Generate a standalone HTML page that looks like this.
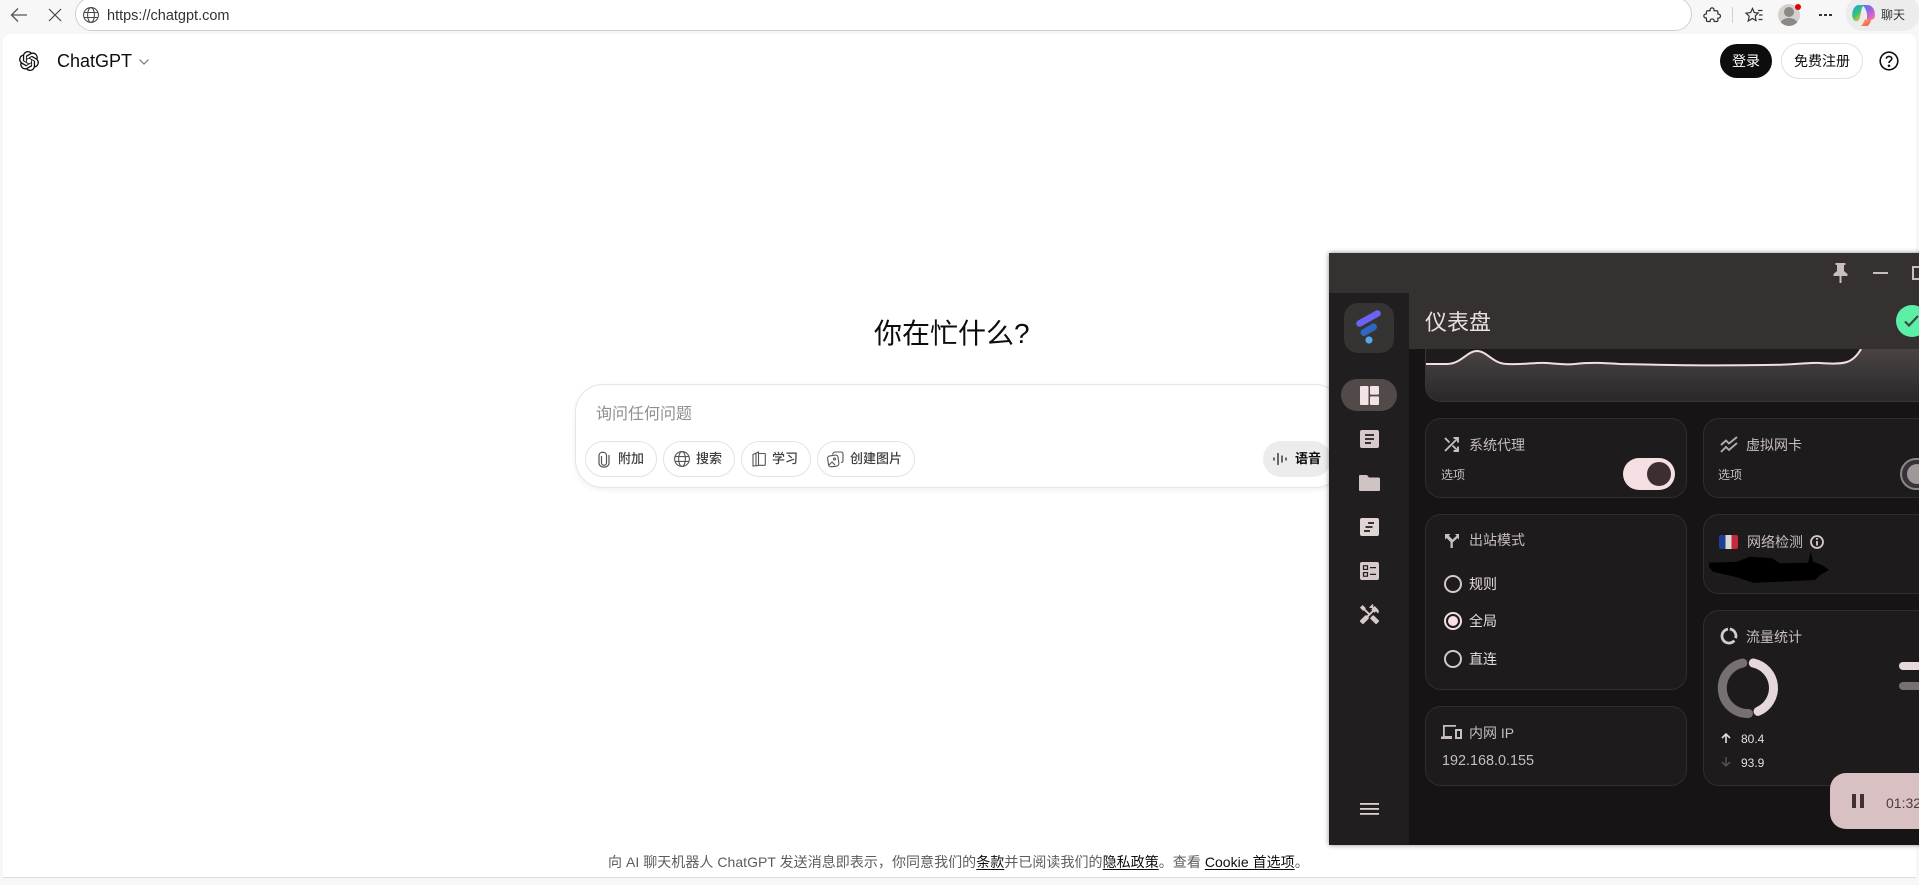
<!DOCTYPE html>
<html lang="zh"><head><meta charset="utf-8"><title>ChatGPT</title>
<style>
*{box-sizing:border-box;margin:0;padding:0}
html,body{width:1919px;height:885px;overflow:hidden;background:#f7f7f7}
body{position:relative;font-family:"Liberation Sans","Noto Sans CJK SC",sans-serif}
.a{position:absolute}
.t{position:absolute;white-space:nowrap;line-height:20px}
svg{position:absolute;display:block;overflow:visible}
.pill{position:absolute;top:441px;height:36px;border:1px solid #e3e3e3;border-radius:18px;background:#fff}
.pt{font-size:13px;color:#404040;font-weight:500;top:449px}
.card{position:absolute;background:#1d1b1c;border:1px solid #2f2d2e;border-radius:16px}
.ct{font-size:14px;color:#c9bdbd}
.rl{font-size:14px;color:#e6dcdc}
.radio{position:absolute;width:18px;height:18px;border:2px solid #d6c8c8;border-radius:50%}
u{text-underline-offset:2px}
</style></head><body>

<!-- browser chrome -->
<svg style="left:10px;top:6px" width="18" height="18" viewBox="0 0 18 18" fill="none" stroke="#555" stroke-width="1.3"><path d="M1.5 9H17M8 2.5L1.5 9L8 15.5"/></svg>
<svg style="left:49px;top:9px" width="12" height="12" viewBox="0 0 12 12" fill="none" stroke="#444" stroke-width="1.2"><path d="M0 0L12 12M12 0L0 12"/></svg>
<div class="a" style="left:75px;top:-3px;width:1617px;height:34px;background:#fff;border:1px solid #cfcfcf;border-radius:17px"></div>
<svg style="left:83px;top:7px" width="16" height="16" viewBox="0 0 16 16" fill="none" stroke="#4a4a4a" stroke-width="1.1"><circle cx="8" cy="8" r="7.4"/><ellipse cx="8" cy="8" rx="3.4" ry="7.4"/><path d="M1 5.5H15M1 10.5H15"/></svg>
<div class="t" style="left:107px;top:6px;font-size:14.5px;color:#333">https://chatgpt.com</div>

<svg style="left:1703px;top:6px" width="18" height="18" viewBox="0 0 24 24" fill="none" stroke="#333" stroke-width="1.6" stroke-linejoin="round"><path d="M9.5 4.5a2.7 2.7 0 0 1 5.2 0c.2.9 0 1.5 0 1.8h3.5c1 0 1.6.7 1.6 1.6v3c.4-.1 1-.2 1.5 0a2.7 2.7 0 0 1 0 5.2c-.5.2-1.1.1-1.5 0v3c0 1-.7 1.6-1.6 1.6h-3.4c.1-.5.2-1 0-1.5a2.7 2.7 0 0 0-5.2 0c-.2.5-.1 1 0 1.5H6.2c-1 0-1.6-.7-1.6-1.6v-3.2c-.4.1-1 .2-1.5 0a2.7 2.7 0 0 1 0-5.2c.5-.2 1.1-.1 1.5 0V7.9c0-1 .7-1.6 1.6-1.6h3.4c-.1-.5-.2-1.2-.1-1.8Z"/></svg>
<div class="a" style="left:1732px;top:7px;width:1px;height:16px;background:#d0d0d0"></div>
<svg style="left:1745px;top:7px" width="18" height="16" viewBox="0 0 18 16" fill="none" stroke="#333" stroke-width="1.2"><path d="M7.5 1.5L9.3 5.6L13.2 6L10.3 9L11 13.6L7.5 11.5L3.2 14L4.2 9.2L1 6.2L5.6 5.6Z"/><path d="M13 3.5H17.5M14 8H17.5M13.5 12.5H17.5"/></svg>
<div class="a" style="left:1778px;top:4px;width:22px;height:22px;border-radius:50%;background:#d3d1cf;overflow:hidden">
 <div class="a" style="left:6px;top:3px;width:10px;height:10px;border-radius:50%;background:#8c8884"></div>
 <div class="a" style="left:2px;top:14px;width:18px;height:14px;border-radius:50%;background:#8c8884"></div>
</div>
<div class="a" style="left:1795px;top:4px;width:6px;height:6px;border-radius:50%;background:#e30000"></div>
<div class="a" style="left:1819px;top:14px;width:3px;height:2.4px;background:#333;box-shadow:5px 0 #333,10px 0 #333"></div>
<div class="a" style="left:1846px;top:-4px;width:74px;height:35px;border-radius:17px;background:#ececec"></div>
<svg style="left:1852px;top:5px" width="23" height="21" viewBox="0 0 23 21">
 <defs>
  <linearGradient id="c1" x1="0" y1="0" x2=".6" y2="1"><stop offset="0" stop-color="#1a9fea"/><stop offset=".55" stop-color="#34c27c"/><stop offset="1" stop-color="#f6c62e"/></linearGradient>
  <linearGradient id="c2" x1="0" y1="0" x2=".7" y2="1"><stop offset="0" stop-color="#2f8cf0"/><stop offset=".5" stop-color="#9a62e8"/><stop offset="1" stop-color="#f06ab0"/></linearGradient>
  <linearGradient id="c3" x1="0" y1="0" x2="1" y2="1"><stop offset="0" stop-color="#ffb43a"/><stop offset="1" stop-color="#ee4a6a"/></linearGradient>
 </defs>
 <path fill="url(#c1)" d="M7 0H12.5C10.5 .5 9.8 3 9.2 6L7.8 13C7.2 16 5 17 3 16C1 15 0 12 .3 8.5C.7 3.5 3.5 0 7 0Z"/>
 <path fill="url(#c2)" d="M10 0H15.5C19.5 0 22.3 3.5 22.8 8C23.2 12 22.5 14.5 19.5 14.5H14.8C15.6 10 15 3.5 10 0Z"/>
 <path fill="url(#c3)" d="M8 21H14.5C17 21 18 18 19.5 14.5H13.5C11.5 14.5 11.5 21 8 21Z"/>
</svg>
<div class="t" style="left:1881px;top:5px;font-size:12px;color:#333">聊天</div>

<!-- page -->
<div class="a" style="left:3px;top:34px;width:1913px;height:844px;background:#fff;border-radius:8px 8px 0 0;border-bottom:1px solid #dcdcdc"></div>

<svg style="left:19px;top:51px" width="20" height="20" viewBox="0 0 24 24" fill="#111"><path d="M22.2819 9.8211a5.9847 5.9847 0 0 0-.5157-4.9108 6.0462 6.0462 0 0 0-6.5098-2.9A6.0651 6.0651 0 0 0 4.9807 4.1818a5.9847 5.9847 0 0 0-3.9977 2.9 6.0462 6.0462 0 0 0 .7427 7.0966 5.98 5.98 0 0 0 .511 4.9107 6.051 6.051 0 0 0 6.5146 2.9001A5.9847 5.9847 0 0 0 13.2599 24a6.0557 6.0557 0 0 0 5.7718-4.2058 5.9894 5.9894 0 0 0 3.9977-2.9001 6.0557 6.0557 0 0 0-.7475-7.0729zm-9.022 12.6081a4.4755 4.4755 0 0 1-2.8764-1.0408l.1419-.0804 4.7783-2.7582a.7948.7948 0 0 0 .3927-.6813v-6.7369l2.02 1.1686a.071.071 0 0 1 .038.052v5.5826a4.504 4.504 0 0 1-4.4945 4.4944zm-9.6607-4.1254a4.4708 4.4708 0 0 1-.5346-3.0137l.142.0852 4.783 2.7582a.7712.7712 0 0 0 .7806 0l5.8428-3.3685v2.3324a.0804.0804 0 0 1-.0332.0615L9.74 19.9502a4.4992 4.4992 0 0 1-6.1408-1.6464zM2.3408 7.8956a4.485 4.485 0 0 1 2.3655-1.9728V11.6a.7664.7664 0 0 0 .3879.6765l5.8144 3.3543-2.0201 1.1685a.0757.0757 0 0 1-.071 0l-4.8303-2.7865A4.504 4.504 0 0 1 2.3408 7.872zm16.5963 3.8558L13.1038 8.364 15.1192 7.2a.0757.0757 0 0 1 .071 0l4.8303 2.7913a4.4944 4.4944 0 0 1-.6765 8.1042v-5.6772a.79.79 0 0 0-.407-.667zm2.0107-3.0231l-.142-.0852-4.7735-2.7818a.7759.7759 0 0 0-.7854 0L9.409 9.2297V6.8974a.0662.0662 0 0 1 .0284-.0615l4.8303-2.7866a4.4992 4.4992 0 0 1 6.6802 4.66zM8.3065 12.863l-2.02-1.1638a.0804.0804 0 0 1-.038-.0567V6.0742a4.4992 4.4992 0 0 1 7.3757-3.4537l-.142.0805L8.704 5.459a.7948.7948 0 0 0-.3927.6813zm1.0976-2.3654l2.602-1.4998 2.6069 1.4998v2.9994l-2.5974 1.4997-2.6067-1.4997Z"/></svg>
<div class="t" style="left:57px;top:51px;font-size:18px;color:#0d0d0d">ChatGPT</div>
<svg style="left:139px;top:59px" width="10" height="6" viewBox="0 0 10 6" fill="none" stroke="#777" stroke-width="1.2"><path d="M.5 .5L5 5L9.5 .5"/></svg>

<div class="a" style="left:1720px;top:44px;width:52px;height:34px;border-radius:17px;background:#0d0d0d"></div>
<div class="t" style="left:1732px;top:51px;font-size:14px;color:#fff">登录</div>
<div class="a" style="left:1781px;top:43px;width:82px;height:36px;border-radius:18px;background:#fff;border:1px solid #e0e0e0"></div>
<div class="t" style="left:1794px;top:51px;font-size:14px;color:#0d0d0d">免费注册</div>
<svg style="left:1879px;top:51px" width="20" height="20" viewBox="0 0 20 20" fill="none" stroke="#111" stroke-width="1.6"><circle cx="10" cy="10" r="8.8"/><path d="M7.3 7.8C7.3 4.6 12.8 4.6 12.8 7.8C12.8 9.8 10 9.8 10 12"/><circle cx="10" cy="14.8" r=".5" fill="#111"/></svg>

<div class="t" style="left:874px;top:314px;font-size:28px;line-height:40px;color:#0d0d0d">你在忙什么?</div>

<div class="a" style="left:575px;top:384px;width:768px;height:104px;background:#fff;border:1px solid #e5e5e5;border-radius:28px;box-shadow:0 2px 6px rgba(0,0,0,.06)"></div>
<div class="t" style="left:596px;top:405px;font-size:16px;color:#8f8f8f">询问任何问题</div>

<div class="pill" style="left:585px;width:72px"></div>
<svg style="left:597px;top:451px" width="14" height="17" viewBox="0 0 14 17" fill="none" stroke="#555" stroke-width="1.2"><path d="M4.5 5V12C4.5 15 9.5 15 9.5 12V4.5C9.5 .2 2 .2 2 4.5V12C2 17.5 12 17.5 12 12V4"/></svg>
<div class="t pt" style="left:618px">附加</div>

<div class="pill" style="left:663px;width:72px"></div>
<svg style="left:674px;top:451px" width="16" height="16" viewBox="0 0 16 16" fill="none" stroke="#555" stroke-width="1.1"><circle cx="8" cy="8" r="7.4"/><ellipse cx="8" cy="8" rx="3.4" ry="7.4"/><path d="M.8 5.6H15.2M.8 10.4H15.2"/></svg>
<div class="t pt" style="left:696px">搜索</div>

<div class="pill" style="left:741px;width:70px"></div>
<svg style="left:752px;top:451px" width="14" height="16" viewBox="0 0 14 16" fill="none" stroke="#555" stroke-width="1.1"><path d="M1 3.5L6.5 1V14.5L1 15Z M6.5 2.5H12.5C13 2.5 13.3 2.8 13.3 3.3V13.5C13.3 14 13 14.3 12.5 14.3H6.5"/><path d="M4 2.5V14.6"/></svg>
<div class="t pt" style="left:772px">学习</div>

<div class="pill" style="left:817px;width:98px"></div>
<svg style="left:827px;top:451px" width="17" height="17" viewBox="0 0 17 17" fill="none" stroke="#555" stroke-width="1.1"><rect x="1" y="4.5" width="10.5" height="11" rx="2.5" transform="rotate(-8 6 10)"/><path d="M5.5 3.5L6 2.5C6.3 1.5 7 1 8 1H14C15.5 1 16 2 16 3V9.5C16 11 15 11.5 14 11.5"/><circle cx="7.5" cy="8" r="1"/><path d="M2 14L5 11L8 14"/></svg>
<div class="t pt" style="left:850px">创建图片</div>

<div class="a" style="left:1263px;top:441px;width:68px;height:36px;border-radius:18px;background:#ececec"></div>
<svg style="left:1273px;top:452px" width="14" height="14" viewBox="0 0 14 14" fill="none" stroke="#222" stroke-width="1.3" stroke-linecap="round"><path d="M1 6V8M5 1.5V12.5M9 4V10M13 6V8"/></svg>
<div class="t" style="left:1295px;top:449px;font-size:13px;font-weight:700;color:#0d0d0d">语音</div>

<div class="t" style="left:608px;top:852px;font-size:14px;letter-spacing:.04px;color:#5d5d5d">向 AI 聊天机器人 ChatGPT 发送消息即表示，你同意我们的<u style="color:#0d0d0d">条款</u>并已阅读我们的<u style="color:#0d0d0d">隐私政策</u>。查看 <u style="color:#0d0d0d">Cookie 首选项</u>。</div>

<!-- dark app window -->
<div class="a" style="left:1329px;top:253px;width:600px;height:592px;background:#161415;box-shadow:0 0 5px rgba(0,0,0,.45)"></div>
<div class="a" style="left:1329px;top:253px;width:600px;height:40px;background:#353130"></div>
<div class="a" style="left:1409px;top:293px;width:520px;height:56px;background:#353130"></div>
<div class="a" style="left:1329px;top:293px;width:80px;height:552px;background:#201e1f"></div>

<!-- title buttons -->
<svg style="left:1833px;top:263px" width="15" height="20" viewBox="0 0 15 20" fill="#c9bdbd"><path d="M2.5 0H12.5V2H11V8L14.5 11V13H8.5V20H6.5V13H.5V11L4 8V2H2.5Z"/></svg>
<div class="a" style="left:1873px;top:272px;width:15px;height:2px;background:#c9bdbd"></div>
<div class="a" style="left:1912px;top:266px;width:14px;height:14px;border:2px solid #c9bdbd"></div>

<div class="t" style="left:1425px;top:307px;font-size:22px;line-height:32px;color:#e8e0e0">仪表盘</div>
<div class="a" style="left:1896px;top:305px;width:32px;height:32px;border-radius:50%;background:#5cf0a6"></div>
<svg style="left:1904px;top:315px" width="15" height="12" viewBox="0 0 15 12" fill="none" stroke="#3d4a43" stroke-width="2.2"><path d="M1 6.5L5 10.5L14 1"/></svg>

<!-- logo -->
<div class="a" style="left:1344px;top:303px;width:50px;height:50px;border-radius:14px;background:#353433"></div>
<svg style="left:1344px;top:303px" width="50" height="50" viewBox="0 0 50 50">
 <path d="M15.5 20.5L33.5 10.5" stroke="#6a63f5" stroke-width="6.5" stroke-linecap="round"/>
 <path d="M20 29.5L29.5 24" stroke="#2f66c0" stroke-width="7" stroke-linecap="round"/>
 <circle cx="25" cy="37" r="3.6" fill="#55a8ee"/>
</svg>

<!-- nav -->
<div class="a" style="left:1341px;top:379px;width:56px;height:32px;border-radius:16px;background:#524949"></div>
<svg style="left:1360px;top:386px" width="19" height="19" viewBox="0 0 19 19" fill="#f2e4e5"><rect width="8.5" height="19" rx="1"/><rect x="10" width="9" height="8.6" rx="1"/><rect x="10" y="10.4" width="9" height="8.6" rx="1"/></svg>
<svg style="left:1360px;top:430px" width="19" height="18" viewBox="0 0 19 18"><rect width="19" height="18" rx="2" fill="#d8caca"/><path d="M5 5H14M5 9H14M5 13H11" stroke="#201e1f" stroke-width="1.8"/></svg>
<svg style="left:1359px;top:475px" width="21" height="16" viewBox="0 0 21 16" fill="#d0c3c3"><path d="M1 0H8L10 2.5H19.5C20.5 2.5 21 3 21 4V15C21 15.6 20.5 16 20 16H1C.5 16 0 15.6 0 15V1C0 .5.5 0 1 0Z"/></svg>
<svg style="left:1360px;top:518px" width="19" height="18" viewBox="0 0 19 18"><rect width="19" height="18" rx="2" fill="#e0d4d4"/><path d="M8 5H14M5.5 9H12.5M4 13H10" stroke="#201e1f" stroke-width="1.8"/></svg>
<svg style="left:1360px;top:562px" width="19" height="18" viewBox="0 0 19 18"><rect width="19" height="18" rx="2" fill="#d8caca"/><g fill="none" stroke="#201e1f" stroke-width="1.2"><rect x="3.5" y="3.8" width="4" height="3.6"/><rect x="3.5" y="10.6" width="4" height="3.6"/><path d="M10 5.6H16M10 12.4H16"/></g></svg>
<svg style="left:1358px;top:603px" width="23" height="23" viewBox="0 0 24 24" fill="#d8caca"><path d="M21.67 18.17l-5.3-5.3h-.99l-2.54 2.54v.99l5.3 5.3c.39.39 1.02.39 1.41 0l2.12-2.12c.39-.38.39-1.02 0-1.41z"/><path d="M17.34 10.19l1.41-1.41 2.12 2.12c1.17-1.17 1.17-3.07 0-4.24l-3.54-3.54-1.41 1.41V1.71l-.7-.71-3.54 3.54.71.71h2.83l-1.41 1.41 1.06 1.06-2.89 2.89-4.13-4.13V5.06L4.83 2.04 2 4.87 5.03 7.9h1.41l4.13 4.13-.85.85H7.6l-5.3 5.3c-.39.39-.39 1.02 0 1.41l2.12 2.12c.39.39 1.02.39 1.41 0l5.3-5.3v-2.12l5.15-5.15 1.06 1.05z"/></svg>
<svg style="left:1360px;top:803px" width="19" height="12" viewBox="0 0 19 12" fill="#dcd0d0"><rect width="19" height="1.8"/><rect y="5" width="19" height="1.8"/><rect y="10" width="19" height="1.8"/></svg>

<!-- chart card -->
<div class="a" style="left:1425px;top:349px;width:520px;height:53px;background:#1d1b1c;border:1px solid #3a3738;border-top:0;border-radius:0 0 16px 16px;overflow:hidden">
 <svg style="left:-1px;top:0" width="522" height="53" viewBox="0 0 522 53">
  <defs><linearGradient id="g" x1="0" y1="0" x2="0" y2="1"><stop offset="0" stop-color="#4a4444"/><stop offset="1" stop-color="#2a2728"/></linearGradient></defs>
  <path fill="url(#g)" d="M0 15H22C36 15 42 2 52 2C62 2 68 15 82 15C100 16 110 13 122 14C135 15 140 16 150 15C165 13 180 14 195 15C240 16 280 17 340 16C375 16 385 13 395 14C420 16 428 14 436 0H522V53H0Z"/>
  <path fill="none" stroke="#f3dfe2" stroke-width="2" d="M0 15H22C36 15 42 2 52 2C62 2 68 15 82 15C100 16 110 13 122 14C135 15 140 16 150 15C165 13 180 14 195 15C240 16 280 17 340 16C375 16 385 13 395 14C420 16 428 14 436 0"/>
 </svg>
</div>

<!-- 系统代理 -->
<div class="card" style="left:1425px;top:418px;width:262px;height:80px"></div>
<svg style="left:1444px;top:437px" width="15" height="15" viewBox="0 0 15 15" fill="none" stroke="#c9bdbd" stroke-width="1.9"><path d="M1 1L5.5 5.5M14 14L8.5 8.5M1 14L14 1M9.5 1H14V5.5M9.5 14H14V9.5"/></svg>
<div class="t ct" style="left:1469px;top:435px">系统代理</div>
<div class="t" style="left:1441px;top:465px;font-size:12px;color:#c9bdbd">选项</div>
<div class="a" style="left:1623px;top:458px;width:52px;height:32px;border-radius:16px;background:#f5dfe2"></div>
<div class="a" style="left:1647px;top:462px;width:24px;height:24px;border-radius:50%;background:#3d2f31"></div>

<!-- 虚拟网卡 -->
<div class="card" style="left:1703px;top:418px;width:260px;height:80px"></div>
<svg style="left:1720px;top:436px" width="18" height="17" viewBox="0 0 18 17" fill="none" stroke="#b5abab" stroke-width="1.9"><path d="M1 9L6 4.5L9 7.5L17 1M1 16L6 11L9 14L17 7"/></svg>
<div class="t ct" style="left:1746px;top:435px">虚拟网卡</div>
<div class="t" style="left:1718px;top:465px;font-size:12px;color:#c9bdbd">选项</div>
<div class="a" style="left:1900px;top:458px;width:52px;height:32px;border-radius:16px;background:#38333a;border:2px solid #8f8787"></div>
<div class="a" style="left:1907px;top:464px;width:20px;height:20px;border-radius:50%;background:#a09898"></div>

<!-- 出站模式 -->
<div class="card" style="left:1425px;top:514px;width:262px;height:176px"></div>
<svg style="left:1444px;top:533px" width="15" height="15" viewBox="0 0 15 15" fill="#c9bdbd"><path d="M6.5 15V9L2.5 5L1 6.5V1H6.5L4.8 2.7L8.5 6.5L10.3 4.7L12.6 2.7L11 1H15V6.5L13.5 5L8.8 9.5V15Z"/></svg>
<div class="t ct" style="left:1469px;top:530px">出站模式</div>
<div class="radio" style="left:1444px;top:575px"></div>
<div class="t rl" style="left:1469px;top:574px">规则</div>
<div class="radio" style="left:1444px;top:612px;border-color:#f3dfe2"></div>
<div class="a" style="left:1448px;top:616px;width:10px;height:10px;border-radius:50%;background:#f8e0e3"></div>
<div class="t rl" style="left:1469px;top:611px">全局</div>
<div class="radio" style="left:1444px;top:650px"></div>
<div class="t rl" style="left:1469px;top:649px">直连</div>

<!-- 内网 IP -->
<div class="card" style="left:1425px;top:706px;width:262px;height:80px"></div>
<svg style="left:1441px;top:725px" width="21" height="14" viewBox="0 0 21 14" fill="#c9bdbd"><path d="M2 0H15V1.8H3.8V11H11V14H0V11.5H2Z"/><path fill-rule="evenodd" d="M14 4H21V14H14ZM16 6V12H19V6Z"/></svg>
<div class="t ct" style="left:1469px;top:723px">内网 IP</div>
<div class="t" style="left:1442px;top:751px;font-size:14.4px;color:#c9bdbd">192.168.0.155</div>

<!-- 网络检测 -->
<div class="card" style="left:1703px;top:514px;width:260px;height:80px"></div>
<div class="a" style="left:1719px;top:535px;width:19px;height:14px;border-radius:2px;background:linear-gradient(90deg,#1d3f94 0 33%,#d9d9d9 33% 66%,#c8283c 66%)"></div>
<div class="t ct" style="left:1747px;top:532px">网络检测</div>
<svg style="left:1810px;top:535px" width="14" height="14" viewBox="0 0 14 14" fill="none" stroke="#d6caca" stroke-width="1.8"><circle cx="7" cy="7" r="6"/><path d="M7 6V10.5M7 3V4.7"/></svg>
<svg style="left:1710px;top:552px" width="122" height="32" viewBox="0 0 122 32" fill="#000"><path d="M-1 10.7L27 9.7L40 4.7L62 6.3L70 11.3L98 10.7L101 -.3L103 9.7L112 13L119 18L110 23L105 28L70 29.7L43 30.7L27 25.3L3 19.7L-1 14.7Z"/></svg>

<!-- 流量统计 -->
<div class="card" style="left:1703px;top:610px;width:260px;height:176px"></div>
<svg style="left:1720px;top:627px" width="18" height="18" viewBox="0 0 18 18" fill="none" stroke="#d6caca" stroke-width="2.8"><path d="M9.8 2.05A7 7 0 0 1 15.6 11.2"/><path d="M14.3 13.6A7 7 0 1 1 8 2.1"/></svg>
<div class="t ct" style="left:1746px;top:627px">流量统计</div>
<svg style="left:1718px;top:658px" width="60" height="60" viewBox="-30 -30 60 60" fill="none" stroke-width="9" stroke-linecap="round">
 <path stroke="#e6d8da" d="M5.3 -25A25.5 25.5 0 0 1 10 23.4"/>
 <path stroke="#767070" d="M.5 25.5A25.5 25.5 0 0 1 -5.2 -25"/>
</svg>
<div class="a" style="left:1899px;top:662px;width:40px;height:8px;border-radius:4px;background:#e8d8da"></div>
<div class="a" style="left:1899px;top:682px;width:40px;height:8px;border-radius:4px;background:#767070"></div>
<svg style="left:1721px;top:733px" width="10" height="10" viewBox="0 0 10 10" fill="none" stroke="#e6dcdc" stroke-width="1.6"><path d="M5 10V1M1 5L5 1L9 5"/></svg>
<div class="t" style="left:1741px;top:729px;font-size:12px;color:#e6dcdc">80.4</div>
<svg style="left:1721px;top:757px" width="10" height="10" viewBox="0 0 10 10" fill="none" stroke="#5d5758" stroke-width="1.3"><path d="M5 0V9M1 5L5 9L9 5"/></svg>
<div class="t" style="left:1741px;top:753px;font-size:12px;color:#e6dcdc">93.9</div>

<!-- pause pill -->
<div class="a" style="left:1830px;top:773px;width:120px;height:56px;border-radius:16px;background:#d9c1c3"></div>
<div class="a" style="left:1852px;top:794px;width:4px;height:14px;background:#403233"></div>
<div class="a" style="left:1860px;top:794px;width:4px;height:14px;background:#403233"></div>
<div class="t" style="left:1886px;top:793px;font-size:14px;color:#4a3d3f">01:32</div>

</body></html>
